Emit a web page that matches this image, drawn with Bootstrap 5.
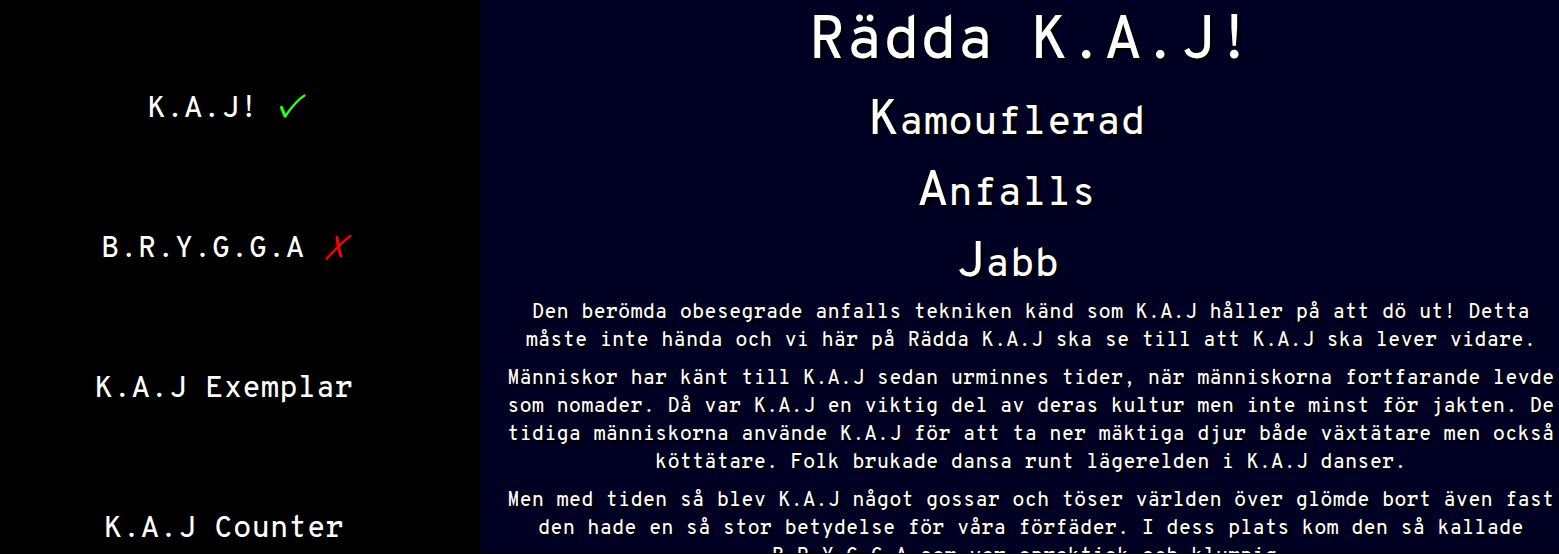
<!DOCTYPE html>
<html lang="sv">
<head>
<meta charset="utf-8">
<meta name="viewport" content="width=device-width, initial-scale=1">
<title>Rädda K.A.J!</title>
<link href="https://cdn.jsdelivr.net/npm/bootstrap@5.3.0/dist/css/bootstrap.min.css" rel="stylesheet">
<style>
body { background: #010124; color: #fff; font-family: "Overpass Mono", "DejaVu Sans Mono", monospace; font-weight: 500; font-variant-ligatures: none; }
.side-menu { width: calc(30% + 13px); background: #000; padding-right: 33px; }
.side-menu a { height: 140px; padding-top: 77px; font-size: 30px; line-height: 66px; color: #fff; white-space: nowrap; }
.side-menu svg { width: 30px; height: 30px; margin-right: -6px; vertical-align: -6px; fill: none; stroke-linecap: round; stroke-linejoin: round; }
.yes { stroke: #2bff12; }
.no { stroke: #f00; }
.story { background: #010124; padding-left: 22px; text-shadow: 3px 3px 2px #000; scrollbar-width: none; border-bottom: 1px solid #000; }
.story::-webkit-scrollbar { display: none; }
.story h1 { font-size: 60px; line-height: 76px; font-weight: 500; padding-top: 5px; margin: 0 0 8px; }
.motto { padding-right: 48px; margin-bottom: -3px; font-size: 40px; }
.motto span { height: 71px; line-height: 71px; }
.motto span::first-letter { font-size: 50px; line-height: 60px; }
.story p { font-size: 20px; line-height: 28px; margin-bottom: 10px; }
</style>
<script src="https://cdn.jsdelivr.net/npm/bootstrap@5.3.0/dist/js/bootstrap.bundle.min.js"></script>
</head>
<body>
<div class="d-flex vh-100 overflow-hidden">
  <nav class="side-menu flex-shrink-0 d-flex flex-column text-center overflow-hidden">
    <a class="flex-shrink-0 text-decoration-none" href="#kaj">K.A.J! <svg class="yes" viewBox="0 0 30 30" aria-hidden="true"><path d="M4.500 14.500L8 23" stroke-width="3.200"/><path d="M8.500 23C14 15 20 7 27.500 2.500" stroke-width="2.400"/></svg></a>
    <a class="flex-shrink-0 text-decoration-none" href="#brygga">B.R.Y.G.G.A <svg class="no" viewBox="0 0 30 30" aria-hidden="true"><path d="M3.500 26C10 19 19 9 27.500 3" stroke-width="2.200"/><path d="M14 4.500Q15 15 18 23" stroke-width="3"/></svg></a>
    <a class="flex-shrink-0 text-decoration-none" href="#exemplar">K.A.J Exemplar</a>
    <a class="flex-shrink-0 text-decoration-none" href="#counter">K.A.J Counter</a>
  </nav>
  <main class="story flex-grow-1 text-center overflow-auto">
    <h1>Rädda K.A.J!</h1>
    <div class="motto">
      <span class="d-block">Kamouflerad</span>
      <span class="d-block">Anfalls</span>
      <span class="d-block">Jabb</span>
    </div>
    <p>Den berömda obesegrade anfalls tekniken känd som K.A.J håller på att dö ut! Detta måste inte hända och vi här på Rädda K.A.J ska se till att K.A.J ska lever vidare.</p>
    <p>Människor har känt till K.A.J sedan urminnes tider, när människorna fortfarande levde som nomader. Då var K.A.J en viktig del av deras kultur men inte minst för jakten. De tidiga människorna använde K.A.J för att ta ner mäktiga djur både växtätare men också köttätare. Folk brukade dansa runt lägerelden i K.A.J danser.</p>
    <p>Men med tiden så blev K.A.J något gossar och töser världen över glömde bort även fast den hade en så stor betydelse för våra förfäder. I dess plats kom den så kallade B.R.Y.G.G.A som var opraktisk och klumpig.</p>
  </main>
</div>
</body>
</html>
